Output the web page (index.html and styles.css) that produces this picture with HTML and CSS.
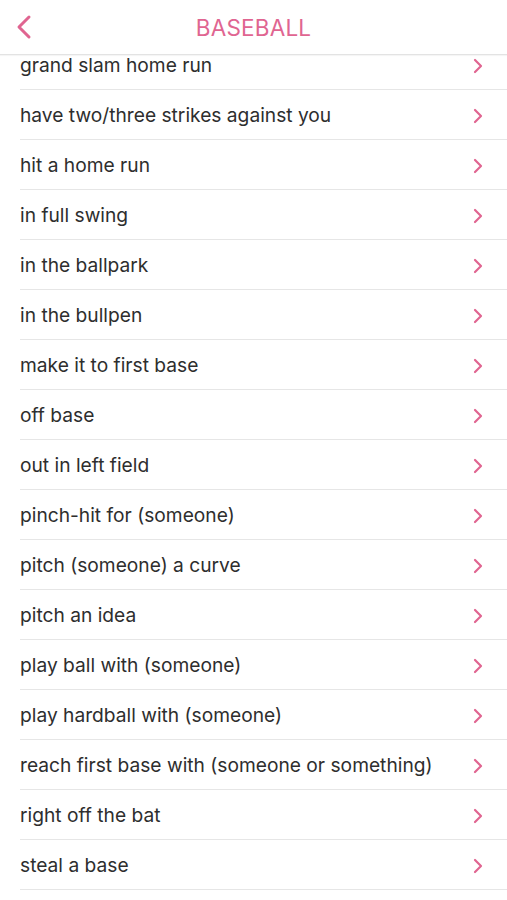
FILE: index.html
```html
<!DOCTYPE html>
<html>
<head>
<meta charset="utf-8">
<link rel="stylesheet" href="styles.css">
</head>
<body>
<div class="screen">
  <header class="nav">
    <svg class="back" width="16" height="26" viewBox="0 0 16 26"><path d="M13 3 L3 13 L13 23" fill="none" stroke="#e06591" stroke-width="3" stroke-linecap="round" stroke-linejoin="round"/></svg>
    <h1 class="title">BASEBALL</h1>
  </header>
  <div class="viewport">
    <ul class="list">
      <li class="row"><span class="label">grand slam home run</span><svg class="chev" width="10" height="16" viewBox="0 0 10 16"><path d="M2 2 L8 8 L2 14" fill="none" stroke="#e06591" stroke-width="2.2" stroke-linecap="round" stroke-linejoin="round"/></svg></li>
      <li class="row"><span class="label">have two/three strikes against you</span><svg class="chev" width="10" height="16" viewBox="0 0 10 16"><path d="M2 2 L8 8 L2 14" fill="none" stroke="#e06591" stroke-width="2.2" stroke-linecap="round" stroke-linejoin="round"/></svg></li>
      <li class="row"><span class="label">hit a home run</span><svg class="chev" width="10" height="16" viewBox="0 0 10 16"><path d="M2 2 L8 8 L2 14" fill="none" stroke="#e06591" stroke-width="2.2" stroke-linecap="round" stroke-linejoin="round"/></svg></li>
      <li class="row"><span class="label">in full swing</span><svg class="chev" width="10" height="16" viewBox="0 0 10 16"><path d="M2 2 L8 8 L2 14" fill="none" stroke="#e06591" stroke-width="2.2" stroke-linecap="round" stroke-linejoin="round"/></svg></li>
      <li class="row"><span class="label">in the ballpark</span><svg class="chev" width="10" height="16" viewBox="0 0 10 16"><path d="M2 2 L8 8 L2 14" fill="none" stroke="#e06591" stroke-width="2.2" stroke-linecap="round" stroke-linejoin="round"/></svg></li>
      <li class="row"><span class="label">in the bullpen</span><svg class="chev" width="10" height="16" viewBox="0 0 10 16"><path d="M2 2 L8 8 L2 14" fill="none" stroke="#e06591" stroke-width="2.2" stroke-linecap="round" stroke-linejoin="round"/></svg></li>
      <li class="row"><span class="label">make it to first base</span><svg class="chev" width="10" height="16" viewBox="0 0 10 16"><path d="M2 2 L8 8 L2 14" fill="none" stroke="#e06591" stroke-width="2.2" stroke-linecap="round" stroke-linejoin="round"/></svg></li>
      <li class="row"><span class="label">off base</span><svg class="chev" width="10" height="16" viewBox="0 0 10 16"><path d="M2 2 L8 8 L2 14" fill="none" stroke="#e06591" stroke-width="2.2" stroke-linecap="round" stroke-linejoin="round"/></svg></li>
      <li class="row"><span class="label">out in left field</span><svg class="chev" width="10" height="16" viewBox="0 0 10 16"><path d="M2 2 L8 8 L2 14" fill="none" stroke="#e06591" stroke-width="2.2" stroke-linecap="round" stroke-linejoin="round"/></svg></li>
      <li class="row"><span class="label">pinch-hit for (someone)</span><svg class="chev" width="10" height="16" viewBox="0 0 10 16"><path d="M2 2 L8 8 L2 14" fill="none" stroke="#e06591" stroke-width="2.2" stroke-linecap="round" stroke-linejoin="round"/></svg></li>
      <li class="row"><span class="label">pitch (someone) a curve</span><svg class="chev" width="10" height="16" viewBox="0 0 10 16"><path d="M2 2 L8 8 L2 14" fill="none" stroke="#e06591" stroke-width="2.2" stroke-linecap="round" stroke-linejoin="round"/></svg></li>
      <li class="row"><span class="label">pitch an idea</span><svg class="chev" width="10" height="16" viewBox="0 0 10 16"><path d="M2 2 L8 8 L2 14" fill="none" stroke="#e06591" stroke-width="2.2" stroke-linecap="round" stroke-linejoin="round"/></svg></li>
      <li class="row"><span class="label">play ball with (someone)</span><svg class="chev" width="10" height="16" viewBox="0 0 10 16"><path d="M2 2 L8 8 L2 14" fill="none" stroke="#e06591" stroke-width="2.2" stroke-linecap="round" stroke-linejoin="round"/></svg></li>
      <li class="row"><span class="label">play hardball with (someone)</span><svg class="chev" width="10" height="16" viewBox="0 0 10 16"><path d="M2 2 L8 8 L2 14" fill="none" stroke="#e06591" stroke-width="2.2" stroke-linecap="round" stroke-linejoin="round"/></svg></li>
      <li class="row"><span class="label">reach first base with (someone or something)</span><svg class="chev" width="10" height="16" viewBox="0 0 10 16"><path d="M2 2 L8 8 L2 14" fill="none" stroke="#e06591" stroke-width="2.2" stroke-linecap="round" stroke-linejoin="round"/></svg></li>
      <li class="row"><span class="label">right off the bat</span><svg class="chev" width="10" height="16" viewBox="0 0 10 16"><path d="M2 2 L8 8 L2 14" fill="none" stroke="#e06591" stroke-width="2.2" stroke-linecap="round" stroke-linejoin="round"/></svg></li>
      <li class="row"><span class="label">steal a base</span><svg class="chev" width="10" height="16" viewBox="0 0 10 16"><path d="M2 2 L8 8 L2 14" fill="none" stroke="#e06591" stroke-width="2.2" stroke-linecap="round" stroke-linejoin="round"/></svg></li>
    </ul>
  </div>
</div>
</body>
</html>
```

FILE: styles.css
```css
html, body {
  margin: 0;
  padding: 0;
  background: #ffffff;
}
body {
  font-family: Inter, "Noto Sans", sans-serif;
  color: #2e2e2e;
}
.screen {
  width: 507px;
  height: 900px;
  display: flex;
  flex-direction: column;
  overflow: hidden;
}
.nav {
  position: relative;
  height: 55px;
  flex: none;
  display: flex;
  align-items: center;
  justify-content: center;
  border-bottom: 1px solid #e3e3e3;
  box-sizing: border-box;
  box-shadow: 0 1px 1px rgba(0,0,0,0.04);
  z-index: 1;
  background: #fff;
}
.back {
  position: absolute;
  left: 16px;
  top: 14px;
}
.title {
  margin: 0;
  padding-top: 1px;
  font-size: 22.5px;
  font-weight: 400;
  color: #e06591;
  letter-spacing: 0.2px;
}
.viewport {
  flex: 1;
  overflow: hidden;
}
.list {
  list-style: none;
  margin: -15px 0 0 0;
  padding: 0 0 0 20px;
}
.row {
  height: 50px;
  box-sizing: border-box;
  display: flex;
  align-items: center;
  justify-content: space-between;
  padding: 1px 24px 0 0;
  border-bottom: 1px solid #e6e6e6;
}
.label {
  font-size: 19.2px;
  line-height: 20px;
}
.chev {
  flex: none;
  margin-top: 1px;
}
```
